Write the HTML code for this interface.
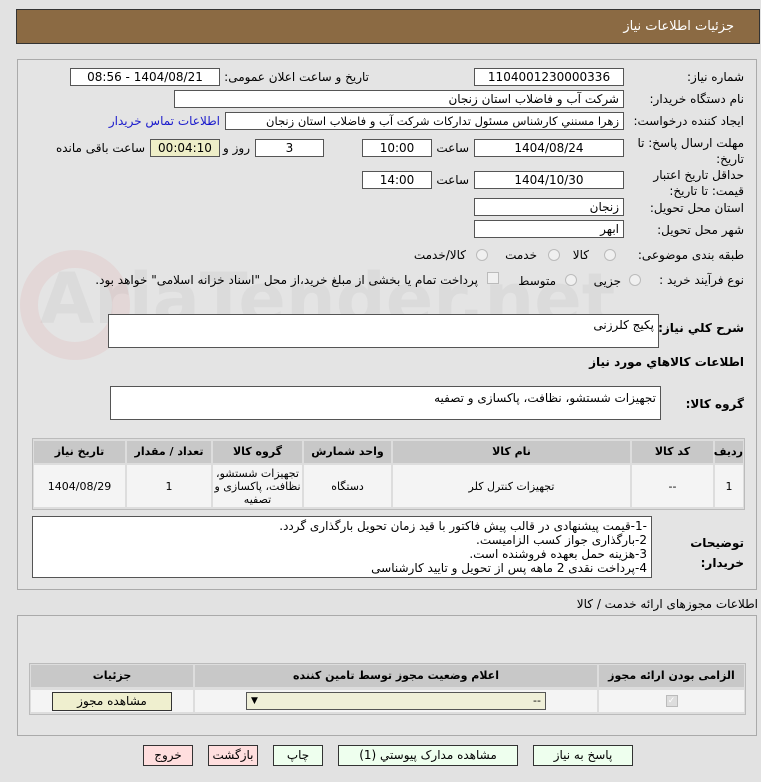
<!DOCTYPE html>
<html><head><meta charset="utf-8"><style>
*{box-sizing:border-box;margin:0;padding:0}
body{width:761px;height:782px;background:#e2e2e2;font-family:Tahoma,"DejaVu Sans","Noto Sans CJK SC",sans-serif;font-size:12px;color:#000;position:relative;overflow:hidden;direction:rtl}
.a{position:absolute;white-space:nowrap}
.in{position:absolute;background:#fff;border:1px solid #555;height:18px;line-height:16px;font-size:12px;padding:0 4px;text-align:center;overflow:hidden;white-space:nowrap}
.l{position:absolute;font-size:12px;white-space:nowrap;text-align:right}
.th{position:absolute;background:#c8c8c8;font-weight:bold;font-size:11px;text-align:center;line-height:22px}
.td{position:absolute;background:#f4f4f4;text-align:center;font-size:11px;display:flex;align-items:center;justify-content:center}
.btn{position:absolute;height:21px;border:1px solid #333;background:#eeffee;font-size:12px;text-align:center;line-height:19px}
.rad{position:absolute;width:12px;height:12px;border-radius:50%;border:1px solid #bbb;background:#f0f0f0}
</style></head><body>
<div class="a" style="left:16px;top:9px;width:744px;height:35px;background:#8b6a43;border:1px solid #333"></div>
<div class="a" style="right:27px;top:19px;color:#fff;font-size:13px">جزئیات اطلاعات نیاز</div>

<div class="a" style="left:17px;top:59px;width:740px;height:531px;border:1px solid #aaa;background:#e4e4e4"></div>
<div class="a" style="left:40px;top:258px;font-size:70px;font-weight:bold;color:rgba(150,150,150,0.10);direction:ltr">AriaTender.net</div>
<div class="a" style="left:20px;top:250px;width:110px;height:110px;border-radius:50%;border:18px solid rgba(220,120,120,0.12)"></div>

<div class="l" style="right:17px;top:70px">شماره نیاز:</div>
<div class="in" style="left:474px;top:68px;width:150px">1104001230000336</div>
<div class="l" style="right:392px;top:70px">تاریخ و ساعت اعلان عمومی:</div>
<div class="in" style="left:70px;top:68px;width:150px">1404/08/21 - 08:56</div>

<div class="l" style="right:17px;top:92px">نام دستگاه خریدار:</div>
<div class="in" style="left:174px;top:90px;width:450px;text-align:right">شرکت آب و فاضلاب استان زنجان</div>

<div class="l" style="right:17px;top:114px">ایجاد کننده درخواست:</div>
<div class="in" style="left:225px;top:112px;width:399px;text-align:right;font-size:11.5px">زهرا مسنني کارشناس مسئول تدارکات شرکت آب و فاضلاب استان زنجان</div>
<div class="l" style="right:541px;top:114px;color:#1a1acc">اطلاعات تماس خریدار</div>

<div class="l" style="right:17px;top:135px;line-height:16px;text-align:right">مهلت ارسال پاسخ: تا<br>تاریخ:</div>
<div class="in" style="left:474px;top:139px;width:150px">1404/08/24</div>
<div class="l" style="right:292px;top:141px">ساعت</div>
<div class="in" style="left:362px;top:139px;width:70px">10:00</div>
<div class="in" style="left:255px;top:139px;width:69px">3</div>
<div class="l" style="right:511px;top:141px">روز و</div>
<div class="in" style="left:150px;top:139px;width:70px;background:#eeeec8">00:04:10</div>
<div class="l" style="right:616px;top:141px">ساعت باقی مانده</div>

<div class="l" style="right:17px;top:167px;line-height:16px">حداقل تاریخ اعتبار<br>قیمت: تا تاریخ:</div>
<div class="in" style="left:474px;top:171px;width:150px">1404/10/30</div>
<div class="l" style="right:292px;top:173px">ساعت</div>
<div class="in" style="left:362px;top:171px;width:70px">14:00</div>

<div class="l" style="right:17px;top:201px">استان محل تحویل:</div>
<div class="in" style="left:474px;top:198px;width:150px;text-align:right">زنجان</div>
<div class="l" style="right:17px;top:223px">شهر محل تحویل:</div>
<div class="in" style="left:474px;top:220px;width:150px;text-align:right">ابهر</div>

<div class="l" style="right:17px;top:248px">طبقه بندی موضوعی:</div>
<div class="rad" style="left:604px;top:249px"></div><div class="l" style="right:172px;top:248px">کالا</div>
<div class="rad" style="left:548px;top:249px"></div><div class="l" style="right:224px;top:248px">خدمت</div>
<div class="rad" style="left:476px;top:249px"></div><div class="l" style="right:295px;top:248px">کالا/خدمت</div>

<div class="l" style="right:17px;top:273px">نوع فرآیند خرید :</div>
<div class="rad" style="left:629px;top:274px"></div><div class="l" style="right:140px;top:274px">جزیی</div>
<div class="rad" style="left:565px;top:274px"></div><div class="l" style="right:205px;top:274px">متوسط</div>
<div class="a" style="left:487px;top:272px;width:12px;height:12px;border:1px solid #bbb;background:#f0f0f0"></div>
<div class="l" style="right:283px;top:273px">پرداخت تمام یا بخشی از مبلغ خرید،از محل "اسناد خزانه اسلامی" خواهد بود.</div>

<div class="l" style="right:17px;top:321px;font-weight:bold">شرح كلي نياز:</div>
<div class="in" style="left:108px;top:314px;width:551px;height:34px;text-align:right;line-height:20px">پکیج کلرزنی</div>
<div class="l" style="right:17px;top:355px;font-weight:bold">اطلاعات کالاهاي مورد نياز</div>
<div class="l" style="right:17px;top:397px;font-weight:bold">گروه کالا:</div>
<div class="in" style="left:110px;top:386px;width:551px;height:34px;text-align:right;line-height:22px">تجهیزات شستشو، نظافت، پاکسازی و تصفیه</div>

<div class="a" style="left:32px;top:438px;width:713px;height:72px;background:#ddd;border:1px solid #bbb"></div>
<div class="th" style="left:715px;top:441px;width:28px">ردیف</div>
<div class="th" style="left:632px;top:441px;width:81px">کد کالا</div>
<div class="th" style="left:393px;top:441px;width:237px">نام کالا</div>
<div class="th" style="left:304px;top:441px;width:87px">واحد شمارش</div>
<div class="th" style="left:213px;top:441px;width:89px">گروه کالا</div>
<div class="th" style="left:127px;top:441px;width:84px">تعداد / مقدار</div>
<div class="th" style="left:34px;top:441px;width:91px">تاریخ نیاز</div>
<div class="td" style="left:715px;top:465px;width:28px;height:42px">1</div>
<div class="td" style="left:632px;top:465px;width:81px;height:42px">--</div>
<div class="td" style="left:393px;top:465px;width:237px;height:42px">تجهیزات کنترل کلر</div>
<div class="td" style="left:304px;top:465px;width:87px;height:42px">دستگاه</div>
<div class="td" style="left:213px;top:465px;width:89px;height:42px;line-height:13px">تجهیزات شستشو،<br>نظافت، پاکسازی و<br>تصفیه</div>
<div class="td" style="left:127px;top:465px;width:84px;height:42px">1</div>
<div class="td" style="left:34px;top:465px;width:91px;height:42px">1404/08/29</div>

<div class="l" style="right:17px;top:533px;font-weight:bold;line-height:20px">توضیحات<br>خریدار:</div>
<div class="in" style="left:32px;top:516px;width:620px;height:62px;text-align:right;line-height:14px;font-size:12px;padding-top:2px">-1-قیمت پیشنهادی در قالب پیش فاکتور با قید زمان تحویل بارگذاری گردد.<br>2-بارگذاری جواز کسب الزامیست.<br>3-هزینه حمل بعهده فروشنده است.<br>4-پرداخت نقدی 2 ماهه پس از تحویل و تایید کارشناسی</div>

<div class="l" style="right:3px;top:597px">اطلاعات مجوزهای ارائه خدمت / کالا</div>
<div class="a" style="left:17px;top:615px;width:740px;height:121px;border:1px solid #aaa;background:#e4e4e4"></div>
<div class="a" style="left:29px;top:663px;width:717px;height:52px;background:#ddd;border:1px solid #bbb"></div>
<div class="th" style="left:599px;top:665px;width:145px">الزامی بودن ارائه مجوز</div>
<div class="th" style="left:195px;top:665px;width:402px">اعلام وضعیت مجوز توسط تامین کننده</div>
<div class="th" style="left:31px;top:665px;width:162px">جزئیات</div>
<div class="td" style="left:599px;top:690px;width:145px;height:22px"><span style="width:12px;height:12px;background:#ddd;border:1px solid #bbb;display:inline-block;font-size:9px;line-height:10px;color:#fff">✓</span></div>
<div class="td" style="left:195px;top:690px;width:402px;height:22px"></div>
<div class="td" style="left:31px;top:690px;width:162px;height:22px"></div>
<div class="a" style="left:246px;top:692px;width:300px;height:18px;background:#efefd8;border:1px solid #555;font-size:11px;line-height:16px;padding-right:4px">--<span style="position:absolute;left:4px;font-size:9px">▼</span></div>
<div class="btn" style="left:52px;top:692px;width:120px;height:19px;line-height:17px;background:#efefcf">مشاهده مجوز</div>

<div class="btn" style="left:533px;top:745px;width:100px">پاسخ به نیاز</div>
<div class="btn" style="left:338px;top:745px;width:180px">مشاهده مدارک پیوستي (1)</div>
<div class="btn" style="left:273px;top:745px;width:50px">چاپ</div>
<div class="btn" style="left:208px;top:745px;width:50px;background:#ffdede">بازگشت</div>
<div class="btn" style="left:143px;top:745px;width:50px;background:#ffdede">خروج</div>
</body></html>
